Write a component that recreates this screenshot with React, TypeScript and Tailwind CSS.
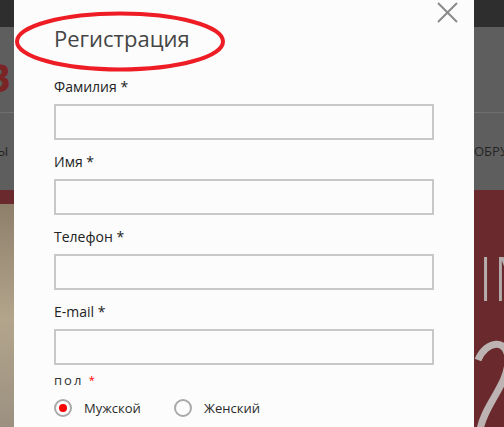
const fields = ['Фамилия', 'Имя', 'Телефон', 'E-mail'];

const Radio = ({ label, checked = false }: { label: string; checked?: boolean }) => (
  <label className="flex items-center gap-[12px]">
    <span className="w-[18px] h-[18px] rounded-full border-2 border-[#a9a9a9] flex items-center justify-center">
      {checked && <span className="w-[8px] h-[8px] rounded-full bg-[#ff0000]" />}
    </span>
    <span className="text-[13px] leading-5 text-[#2b2b2b]">{label}</span>
  </label>
);

export default function App() {
  return (
    <div className="relative w-[504px] h-[427px] overflow-hidden bg-[#5e5e5e] font-['Open_Sans',sans-serif]">
      {/* page behind the dialog */}
      <div className="h-[27px] bg-[#2e2e2e]" />
      <div className="h-[86px] border-b border-[#6f6f6f] flex items-center">
        <span className="-ml-[16px] mt-[14px] text-[40px] font-bold leading-none text-[#7a2426]">В</span>
      </div>
      <div className="h-[77px] flex items-center justify-between text-[13px] text-[#252525]">
        <span className="-ml-[10px]">ТЫ</span>
        <span className="w-[32px] overflow-hidden whitespace-nowrap -mr-[2px]">ОБРУДОВАНИЕ</span>
      </div>
      <div className="relative h-[237px] bg-[#6a2a2d]">
        <div className="absolute left-0 top-[14px] w-[16px] h-[230px] bg-gradient-to-b from-[#8d7f6a] via-[#b3a58c] to-[#9a8f80]" />
        <span className="absolute left-[478px] top-[58px] text-[60px] font-light leading-none text-[#b5acac]">IM</span>
        <svg className="absolute left-[474px] top-[140px]" width="30" height="100" viewBox="0 0 30 100">
          <path d="M4 30 C 12 10, 34 8, 34 30 C 34 55, 10 75, 6 100" fill="none" stroke="#bdb3b3" strokeWidth="7" />
        </svg>
      </div>

      {/* dialog */}
      <div className="absolute left-[14px] top-0 bottom-0 w-[460px] bg-[#fbfcfb] pl-[40px] pt-[26px]">
        <button className="absolute right-[16px] top-[2px]">
          <svg width="21" height="21" viewBox="0 0 21 21">
            <path d="M1 1 L20 20 M20 1 L1 20" stroke="#8a8a8a" strokeWidth="2" />
          </svg>
        </button>
        <svg className="absolute left-[1px] top-[11px]" width="212" height="62" viewBox="0 0 212 62">
          <ellipse cx="105" cy="30.5" rx="103" ry="28" fill="none" stroke="#ee1c24" strokeWidth="4" />
        </svg>
        <h2 className="relative text-[22px] leading-[24px] font-normal text-[#454545]">Регистрация</h2>

        <div className="mt-[27px] w-[380px] flex flex-col gap-[12px]">
          {fields.map((f) => (
            <div key={f}>
              <div className="text-[14px] leading-5 text-[#222] mb-[7px]">{f} *</div>
              <input className="block w-full h-[36px] border-2 border-[#c9c7ca] bg-[#fbfcfb] outline-none" />
            </div>
          ))}
        </div>

        <div className="mt-[5px] text-[13px] leading-5 tracking-[2px] text-[#333]">
          пол <span className="text-[11px] align-top text-[#ff0000]">*</span>
        </div>
        <div className="mt-[8px] flex">
          <div className="w-[120px]">
            <Radio label="Мужской" checked />
          </div>
          <Radio label="Женский" />
        </div>
      </div>
    </div>
  );
}
